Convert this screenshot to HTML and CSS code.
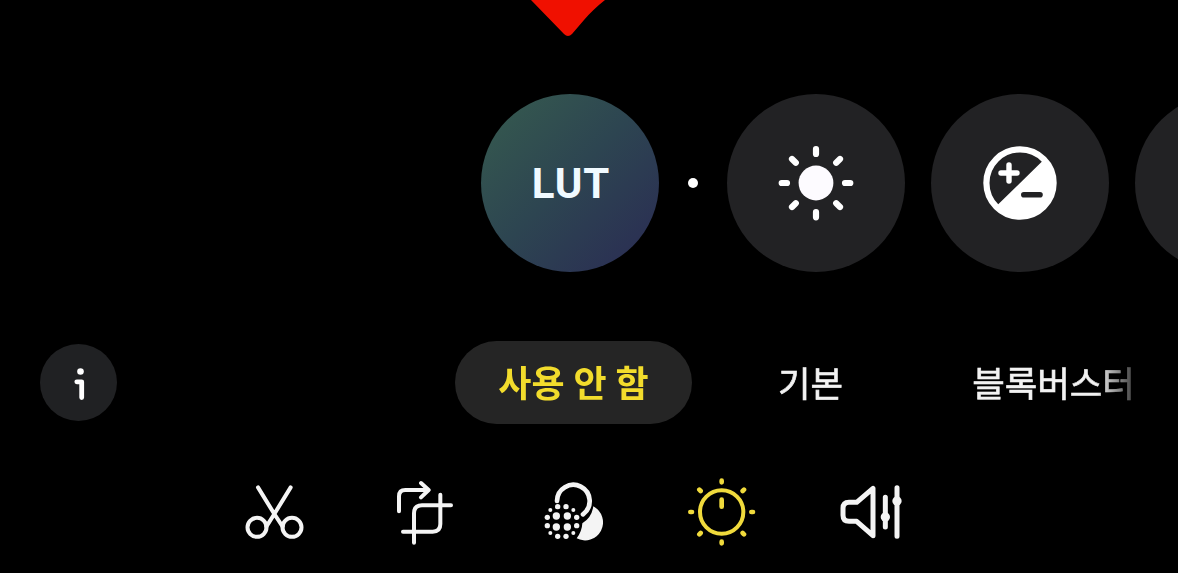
FILE: index.html
```html
<!DOCTYPE html>
<html lang="ko">
<head>
  <meta charset="utf-8">
  <meta name="viewport" content="width=device-width, initial-scale=1">
  <title>LUT</title>
  <link rel="stylesheet" href="styles.css">
</head>
<body>
  <svg class="marker" viewBox="0 0 74 37">
    <path d="M0 0H74C66 6 59 13 53 20L41 34Q37 38 33 34Z"/>
  </svg>

  <div class="effects">
    <button class="effect lut">LUT</button>
    <span class="dot"></span>
    <button class="effect">
      <svg class="effect-icon" viewBox="-40 -40 80 80">
        <circle r="17.4" fill="#fdfbff"/>
        <g stroke="#fff" stroke-width="6.2" stroke-linecap="round">
          <path d="M0 -34V-29M0 34.3V29M-34.3 0H-29M34.3 0H29"/>
          <path d="M-24 -24L-20.2 -20.2M24 -24L20.2 -20.2M-24 24L-20.2 20.2M24 24L20.2 20.2"/>
        </g>
      </svg>
    </button>
    <button class="effect">
      <svg class="effect-icon" viewBox="-40 -40 80 80">
        <circle r="33.6" fill="none" stroke="#fff" stroke-width="6.2"/>
        <path d="M23.8 -23.3L-23.8 23.3A33.3 33.3 0 0 0 23.8 -23.3Z" fill="#fff"/>
        <path d="M-19 -10H-3M-11 -18V-2" stroke="#fff" stroke-width="5.4" stroke-linecap="round"/>
        <path d="M3.8 11.7H20" stroke="#222224" stroke-width="5.6" stroke-linecap="round"/>
      </svg>
    </button>
    <button class="effect"></button>
  </div>

  <div class="filters">
    <button class="info">
      <svg viewBox="0 0 76 76">
        <circle cx="39.5" cy="26.5" r="3.3" fill="#fff"/>
        <path d="M35.8 36.8H40.7V52.6" fill="none" stroke="#fff" stroke-width="4.8" stroke-linecap="round" stroke-linejoin="round"/>
      </svg>
    </button>
    <div class="filter-list">
      <button class="filter active">사용 안 함</button>
      <button class="filter">기본</button>
      <button class="filter">블록버스터</button>
    </div>
  </div>

  <div class="toolbar">
    <!-- trim -->
    <svg class="tool" viewBox="0 0 270 270">
      <circle cx="81" cy="172" r="28.5"/>
      <circle cx="186" cy="172" r="28.5"/>
      <path d="M84 52L133 132L158 170M182 52L133 132L109 170"/>
    </svg>
    <!-- crop -->
    <svg class="tool" viewBox="-3 0 270 270">
      <path d="M57 124V79Q57 60 76 60H144M123 39L146 60L123 82"/>
      <path d="M181 74V162Q181 185 158 185H69M102 218V130Q102 106 126 106H213"/>
    </svg>
    <!-- filters -->
    <svg class="tool" viewBox="-6 0 270 270">
      <path class="ring" d="M81 93A49 49 0 1 1 159 133"/>
      <path class="solid" d="M190 109A52 52 0 0 1 140 205Q156 184 157 160Q185 143 190 109Z"/>
      <g class="solid">
        <circle cx="79" cy="138" r="11"/>
        <circle cx="112" cy="138" r="11"/>
        <circle cx="79" cy="171" r="11"/>
        <circle cx="112" cy="171" r="11"/>
        <circle cx="83" cy="110" r="8"/>
        <circle cx="108" cy="110" r="8"/>
        <circle cx="83" cy="199" r="8"/>
        <circle cx="108" cy="199" r="8"/>
        <circle cx="52" cy="142" r="8"/>
        <circle cx="52" cy="167" r="8"/>
        <circle cx="140" cy="142" r="8"/>
        <circle cx="140" cy="167" r="8"/>
        <circle cx="61" cy="120" r="6"/>
        <circle cx="130" cy="120" r="6"/>
        <circle cx="61" cy="189" r="6"/>
        <circle cx="130" cy="189" r="6"/>
      </g>
    </svg>
    <!-- adjust -->
    <svg class="tool active" viewBox="6 15 270 270">
      <circle cx="140" cy="141" r="65"/>
      <path class="thick" d="M140 104V125M140 47V52M140 230V235M46 141H51M229 141H234M73 74L77 78M207 74L203 78M73 208L77 204M207 208L203 204"/>
    </svg>
    <!-- volume -->
    <svg class="tool" viewBox="3 0 270 270">
      <path class="wide" d="M144 55V197L95 154H72Q54 154 54 136V115Q54 97 72 97H95Z"/>
      <path class="wide" d="M181 82V171M216 53V199"/>
      <circle class="solid" cx="181" cy="141" r="14"/>
      <circle class="solid" cx="216" cy="93" r="14"/>
    </svg>
  </div>
</body>
</html>
```
FILE: styles.css
```css
* {
  box-sizing: border-box;
}

html, body {
  height: 100%;
}

body {
  margin: 0;
  overflow: hidden;
  background-color: #000;
  color: #f2f2f2;
  font-family: Roboto, "Noto Sans CJK KR", sans-serif;
}

button {
  display: flex;
  flex-shrink: 0;
  align-items: center;
  justify-content: center;
  padding: 0;
  border: none;
  background: none;
  color: inherit;
  font: inherit;
}

.marker {
  display: block;
  width: 74px;
  height: 37px;
  margin-left: 531px;
  fill: #f01000;
}

.effects {
  display: flex;
  align-items: center;
  gap: 26px;
  margin-top: 57px;
  padding-left: 481px;
  overflow: hidden;
}

.effect {
  width: 178px;
  height: 178px;
  border-radius: 50%;
  background-color: #222224;
}

.lut {
  padding-left: 2px;
  background: linear-gradient(135deg, #34564f 12%, #2d4551 48%, #2b3253 85%);
  color: #f0faff;
  font-size: 42px;
  font-weight: 700;
  letter-spacing: 1px;
}

.dot {
  flex-shrink: 0;
  width: 10px;
  height: 10px;
  margin: 0 3px;
  border-radius: 50%;
  background-color: #fff;
}

.effect-icon {
  width: 80px;
  height: 80px;
}

.filters {
  display: flex;
  align-items: center;
  height: 83px;
  margin-top: 69px;
  padding-left: 40px;
}

.info {
  width: 77px;
  height: 77px;
  border-radius: 50%;
  background-color: #202123;
}

.info svg {
  width: 76px;
  height: 76px;
}

/* labels fade out towards the right edge */
.filter-list {
  display: flex;
  width: 685px;
  margin-left: 338px;
  overflow: hidden;
  -webkit-mask-image: linear-gradient(to right, #000 642px, transparent 692px);
  mask-image: linear-gradient(to right, #000 642px, transparent 692px);
}

.filter {
  height: 83px;
  padding: 0 43px 3px;
  border-radius: 42px;
  font-size: 35.4px;
  white-space: nowrap;
  -webkit-text-stroke: 0.6px;
}

.filter.active {
  width: 237px;
  background-color: #252525;
  color: #f2dc2c;
  font-size: 36px;
  font-weight: 700;
  -webkit-text-stroke: 0;
}

.filter + .filter {
  margin-left: 43px;
}

.toolbar {
  display: flex;
  gap: 59px;
  margin-top: 46px;
  padding-left: 230px;
}

.tool {
  width: 90px;
  height: 90px;
  fill: none;
  stroke: #f4f4f4;
  stroke-width: 12;
  stroke-linecap: round;
  stroke-linejoin: round;
}

.tool.active {
  stroke: #f0da3c;
}

.tool .ring {
  stroke-width: 14;
}

.tool .wide {
  stroke-width: 15;
}

.tool .thick {
  stroke-width: 14;
}

.tool .solid {
  fill: #f4f4f4;
  stroke: none;
}
```
